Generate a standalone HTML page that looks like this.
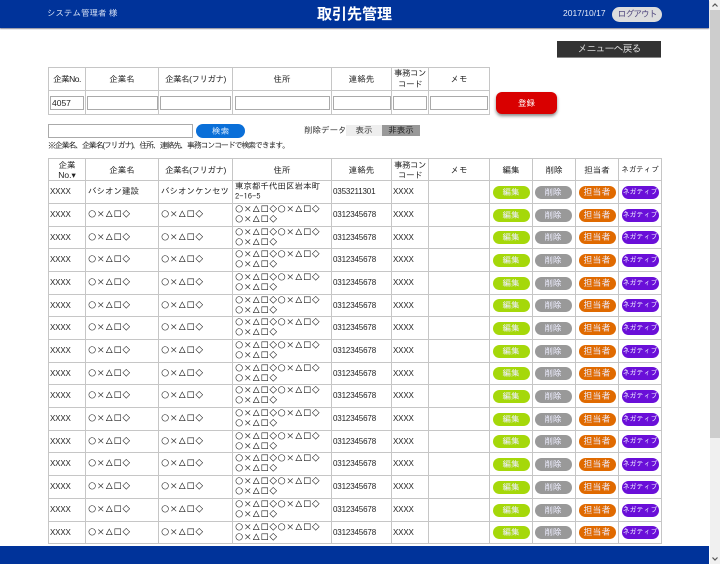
<!DOCTYPE html>
<html lang="ja">
<head>
<meta charset="utf-8">
<title>取引先管理</title>
<style>
html,body{margin:0;padding:0;width:720px;height:564px;overflow:hidden;background:#fff}
body{position:relative;font-family:"Liberation Sans","IPAGothic","Noto Sans CJK JP",sans-serif;font-size:8.5px;color:#333}
.abs{position:absolute;white-space:nowrap}
#hd{position:absolute;left:0;top:0;width:709px;height:28px;background:#00339a;box-shadow:0 1px 1px #889}
#ft{position:absolute;left:0;top:546px;width:709px;height:18px;background:#00339a}
#sb{position:absolute;left:710px;top:0;width:10px;height:564px;background:#f0f0f0}
#th{position:absolute;left:0;top:10px;width:10px;height:428px;background:#cdcdcd}
#main{position:absolute;left:0;top:0;width:709px;height:546px;overflow:hidden;filter:blur(.3px)}
table{position:absolute;left:48px;border-collapse:collapse;table-layout:fixed;font-size:8.5px}
td{border:1px solid #c6c6c6;padding:0;text-align:center;vertical-align:middle;line-height:10px;overflow:hidden;white-space:nowrap;color:#222}
.k{letter-spacing:-.5px}
.l td{text-align:left;padding-left:2px;font-family:"IPAGothic",sans-serif;color:#222}
.l td.x{font-family:"Liberation Sans",sans-serif;font-size:8px;padding-left:1px;letter-spacing:-.15px}
.l td.b{padding:0;text-align:center}
.inp{display:block;box-sizing:border-box;height:14px;margin:0 auto;border:1px solid #aaa;background:#fff}
.p{display:block;width:37px;height:13px;line-height:13px;border-radius:7px;color:#eef;margin:0 auto;font-family:"Liberation Sans","IPAGothic",sans-serif;font-size:8.5px;text-align:center;overflow:hidden}
.e{background:#a5d80a}.d{background:#999;position:relative;left:-1px}.t{background:#e06a00;font-size:9px}.n{background:#6a0fd8;font-size:7px}
</style>
</head>
<body>
<div id="main">
<div class="abs" style="left:557px;top:41px;width:104px;height:17px;line-height:17px;background:#333;color:#ddd;text-align:center;font-size:10px;letter-spacing:-1px;border-bottom:1px solid #888;box-sizing:border-box">メニューへ戻る</div>

<table style="top:67px;width:441px">
<colgroup><col style="width:37px"><col style="width:73px"><col style="width:74px"><col style="width:99px"><col style="width:60px"><col style="width:37px"><col style="width:61px"></colgroup>
<tr style="height:23px"><td class="k">企業No.</td><td>企業名</td><td class="k">企業名(フリガナ)</td><td>住所</td><td>連絡先</td><td class="k" style="line-height:11px">事務コン<br>コード</td><td>メモ</td></tr>
<tr style="height:24px">
<td><span class="inp" style="width:34px;text-align:left;padding-left:1px;line-height:12px;color:#222">4057</span></td>
<td><span class="inp" style="width:71px"></span></td>
<td><span class="inp" style="width:71px"></span></td>
<td><span class="inp" style="width:95px"></span></td>
<td><span class="inp" style="width:58px"></span></td>
<td><span class="inp" style="width:34px"></span></td>
<td><span class="inp" style="width:58px"></span></td>
</tr>
</table>

<div class="abs" style="left:496px;top:92px;width:61px;height:22px;line-height:22px;background:#d90000;border-radius:6px;color:#fff;text-align:center;box-shadow:0 2px 3px #888">登録</div>

<div class="abs" style="left:48px;top:124px;width:145px;height:14px;box-sizing:border-box;border:1px solid #aaa;background:#fff"></div>
<div class="abs" style="left:196px;top:124px;width:49px;height:14px;line-height:14px;background:#0a6fd8;border-radius:7px;color:#dfeeff;text-align:center">検索</div>
<div class="abs" style="left:304px;top:125px;line-height:11px">削除データ</div>
<div class="abs" style="left:346px;top:125px;width:36px;height:11px;line-height:11px;background:#eee;text-align:center">表示</div>
<div class="abs" style="left:382px;top:125px;width:38px;height:11px;line-height:11px;background:#999;text-align:center;color:#222">非表示</div>
<div class="abs" style="left:48px;top:141px;line-height:10px;font-size:8px;letter-spacing:-1.2px;color:#222">※企業名、企業名(フリガナ)、住所、連絡先、事務コンコードで検索できます。</div>

<table style="top:158px;width:613px">
<colgroup><col style="width:37px"><col style="width:73px"><col style="width:74px"><col style="width:99px"><col style="width:60px"><col style="width:37px"><col style="width:61px"><col style="width:43px"><col style="width:43px"><col style="width:43px"><col style="width:43px"></colgroup>
<tr style="height:22px"><td>企業<br>No.▾</td><td>企業名</td><td class="k">企業名(フリガナ)</td><td>住所</td><td>連絡先</td><td class="k">事務コン<br>コード</td><td>メモ</td><td>編集</td><td>削除</td><td>担当者</td><td style="font-size:7.5px">ネガティブ</td></tr>
<tr class="l" style="height:23px"><td class="x">XXXX</td><td>バシオン建設</td><td>バシオンケンセツ</td><td>東京都千代田区岩本町<br>2-16-5</td><td class="x">0353211301</td><td class="x">XXXX</td><td></td><td class="b"><span class="p e">編集</span></td><td class="b"><span class="p d">削除</span></td><td class="b"><span class="p t">担当者</span></td><td class="b"><span class="p n">ネガティブ</span></td></tr>
<tr class="l" style="height:23px"><td class="x">XXXX</td><td>○×△□◇</td><td>○×△□◇</td><td>○×△□◇○×△□◇<br>○×△□◇</td><td class="x">0312345678</td><td class="x">XXXX</td><td></td><td class="b"><span class="p e">編集</span></td><td class="b"><span class="p d">削除</span></td><td class="b"><span class="p t">担当者</span></td><td class="b"><span class="p n">ネガティブ</span></td></tr>
<tr class="l" style="height:22px"><td class="x">XXXX</td><td>○×△□◇</td><td>○×△□◇</td><td>○×△□◇○×△□◇<br>○×△□◇</td><td class="x">0312345678</td><td class="x">XXXX</td><td></td><td class="b"><span class="p e">編集</span></td><td class="b"><span class="p d">削除</span></td><td class="b"><span class="p t">担当者</span></td><td class="b"><span class="p n">ネガティブ</span></td></tr>
<tr class="l" style="height:23px"><td class="x">XXXX</td><td>○×△□◇</td><td>○×△□◇</td><td>○×△□◇○×△□◇<br>○×△□◇</td><td class="x">0312345678</td><td class="x">XXXX</td><td></td><td class="b"><span class="p e">編集</span></td><td class="b"><span class="p d">削除</span></td><td class="b"><span class="p t">担当者</span></td><td class="b"><span class="p n">ネガティブ</span></td></tr>
<tr class="l" style="height:23px"><td class="x">XXXX</td><td>○×△□◇</td><td>○×△□◇</td><td>○×△□◇○×△□◇<br>○×△□◇</td><td class="x">0312345678</td><td class="x">XXXX</td><td></td><td class="b"><span class="p e">編集</span></td><td class="b"><span class="p d">削除</span></td><td class="b"><span class="p t">担当者</span></td><td class="b"><span class="p n">ネガティブ</span></td></tr>
<tr class="l" style="height:22px"><td class="x">XXXX</td><td>○×△□◇</td><td>○×△□◇</td><td>○×△□◇○×△□◇<br>○×△□◇</td><td class="x">0312345678</td><td class="x">XXXX</td><td></td><td class="b"><span class="p e">編集</span></td><td class="b"><span class="p d">削除</span></td><td class="b"><span class="p t">担当者</span></td><td class="b"><span class="p n">ネガティブ</span></td></tr>
<tr class="l" style="height:23px"><td class="x">XXXX</td><td>○×△□◇</td><td>○×△□◇</td><td>○×△□◇○×△□◇<br>○×△□◇</td><td class="x">0312345678</td><td class="x">XXXX</td><td></td><td class="b"><span class="p e">編集</span></td><td class="b"><span class="p d">削除</span></td><td class="b"><span class="p t">担当者</span></td><td class="b"><span class="p n">ネガティブ</span></td></tr>
<tr class="l" style="height:23px"><td class="x">XXXX</td><td>○×△□◇</td><td>○×△□◇</td><td>○×△□◇○×△□◇<br>○×△□◇</td><td class="x">0312345678</td><td class="x">XXXX</td><td></td><td class="b"><span class="p e">編集</span></td><td class="b"><span class="p d">削除</span></td><td class="b"><span class="p t">担当者</span></td><td class="b"><span class="p n">ネガティブ</span></td></tr>
<tr class="l" style="height:22px"><td class="x">XXXX</td><td>○×△□◇</td><td>○×△□◇</td><td>○×△□◇○×△□◇<br>○×△□◇</td><td class="x">0312345678</td><td class="x">XXXX</td><td></td><td class="b"><span class="p e">編集</span></td><td class="b"><span class="p d">削除</span></td><td class="b"><span class="p t">担当者</span></td><td class="b"><span class="p n">ネガティブ</span></td></tr>
<tr class="l" style="height:23px"><td class="x">XXXX</td><td>○×△□◇</td><td>○×△□◇</td><td>○×△□◇○×△□◇<br>○×△□◇</td><td class="x">0312345678</td><td class="x">XXXX</td><td></td><td class="b"><span class="p e">編集</span></td><td class="b"><span class="p d">削除</span></td><td class="b"><span class="p t">担当者</span></td><td class="b"><span class="p n">ネガティブ</span></td></tr>
<tr class="l" style="height:23px"><td class="x">XXXX</td><td>○×△□◇</td><td>○×△□◇</td><td>○×△□◇○×△□◇<br>○×△□◇</td><td class="x">0312345678</td><td class="x">XXXX</td><td></td><td class="b"><span class="p e">編集</span></td><td class="b"><span class="p d">削除</span></td><td class="b"><span class="p t">担当者</span></td><td class="b"><span class="p n">ネガティブ</span></td></tr>
<tr class="l" style="height:22px"><td class="x">XXXX</td><td>○×△□◇</td><td>○×△□◇</td><td>○×△□◇○×△□◇<br>○×△□◇</td><td class="x">0312345678</td><td class="x">XXXX</td><td></td><td class="b"><span class="p e">編集</span></td><td class="b"><span class="p d">削除</span></td><td class="b"><span class="p t">担当者</span></td><td class="b"><span class="p n">ネガティブ</span></td></tr>
<tr class="l" style="height:23px"><td class="x">XXXX</td><td>○×△□◇</td><td>○×△□◇</td><td>○×△□◇○×△□◇<br>○×△□◇</td><td class="x">0312345678</td><td class="x">XXXX</td><td></td><td class="b"><span class="p e">編集</span></td><td class="b"><span class="p d">削除</span></td><td class="b"><span class="p t">担当者</span></td><td class="b"><span class="p n">ネガティブ</span></td></tr>
<tr class="l" style="height:23px"><td class="x">XXXX</td><td>○×△□◇</td><td>○×△□◇</td><td>○×△□◇○×△□◇<br>○×△□◇</td><td class="x">0312345678</td><td class="x">XXXX</td><td></td><td class="b"><span class="p e">編集</span></td><td class="b"><span class="p d">削除</span></td><td class="b"><span class="p t">担当者</span></td><td class="b"><span class="p n">ネガティブ</span></td></tr>
<tr class="l" style="height:23px"><td class="x">XXXX</td><td>○×△□◇</td><td>○×△□◇</td><td>○×△□◇○×△□◇<br>○×△□◇</td><td class="x">0312345678</td><td class="x">XXXX</td><td></td><td class="b"><span class="p e">編集</span></td><td class="b"><span class="p d">削除</span></td><td class="b"><span class="p t">担当者</span></td><td class="b"><span class="p n">ネガティブ</span></td></tr>
<tr class="l" style="height:22px"><td class="x">XXXX</td><td>○×△□◇</td><td>○×△□◇</td><td>○×△□◇○×△□◇<br>○×△□◇</td><td class="x">0312345678</td><td class="x">XXXX</td><td></td><td class="b"><span class="p e">編集</span></td><td class="b"><span class="p d">削除</span></td><td class="b"><span class="p t">担当者</span></td><td class="b"><span class="p n">ネガティブ</span></td></tr>
</table>
</div>

<div id="hd">
<div class="abs" style="left:47px;top:8px;line-height:11px;color:#d5e0f5;font-size:8.5px">システム管理者 様</div>
<div class="abs" style="left:317px;top:5px;line-height:18px;color:#fff;font-size:15px;font-weight:bold;font-family:'Noto Sans CJK JP',sans-serif">取引先管理</div>
<div class="abs" style="left:563px;top:8px;line-height:11px;color:#e4ebf8;font-size:8.5px">2017/10/17</div>
<div class="abs" style="left:612px;top:7px;width:50px;height:15px;line-height:15px;background:#ddd;border-radius:8px;color:#534a80;text-align:center;font-size:9px;letter-spacing:-1.2px">ログアウト</div>
</div>
<div id="ft"></div>
<div id="sb">
<div id="th"></div>
<svg style="position:absolute;left:2px;top:3px" width="6" height="4" viewBox="0 0 6 4"><path d="M0.5 3.5L3 1L5.5 3.5" fill="none" stroke="#555" stroke-width="1.2"/></svg>
<svg style="position:absolute;left:2px;top:557px" width="6" height="4" viewBox="0 0 6 4"><path d="M0.5 .5L3 3L5.5 .5" fill="none" stroke="#555" stroke-width="1.2"/></svg>
</div>
</body>
</html>
